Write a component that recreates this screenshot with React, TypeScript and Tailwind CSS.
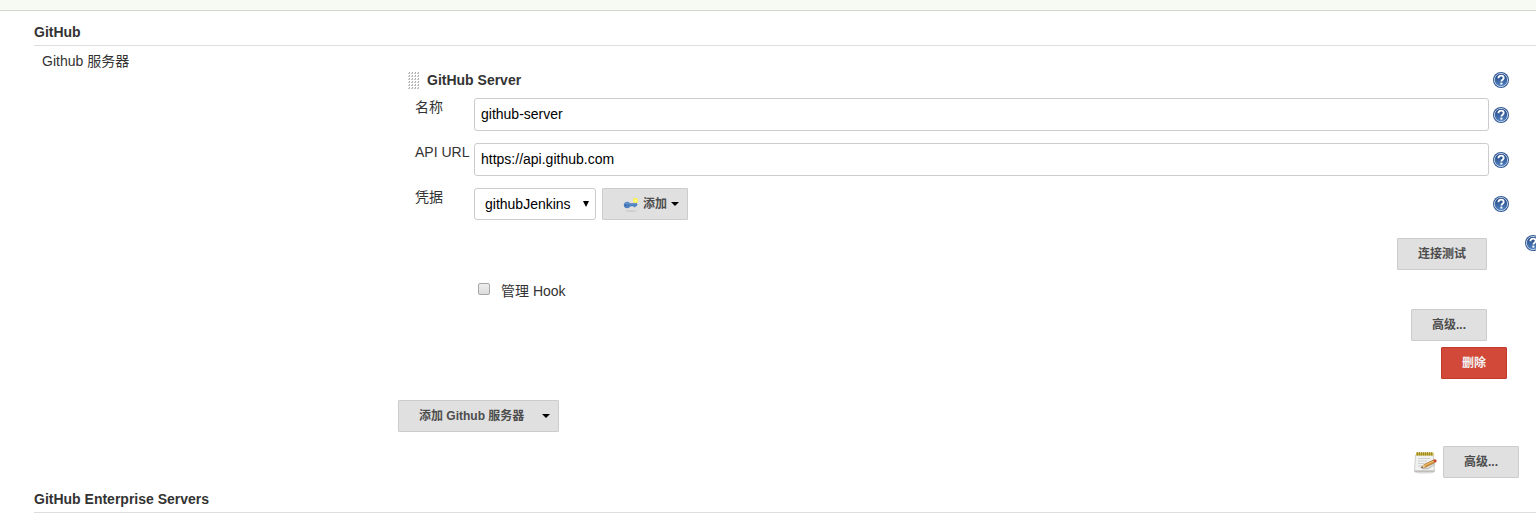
import type { ReactNode } from 'react';

const buttonBase =
  'flex h-8 shrink-0 items-center whitespace-nowrap rounded-[1px] border text-xs font-bold';
const grayButton = `${buttonBase} border-[#cccccc] bg-[#e0e0e0] px-5 text-[#4d4d4d]`;
const menuButton = `${buttonBase} border-[#cccccc] bg-[#e0e0e0] pr-2 pl-5 text-[#4d4d4d]`;
const redButton = `${buttonBase} border-[#c03b2b] bg-[#d24939] px-5 text-[#f2f2f2]`;

function HelpButton({ topic }: { topic: string }) {
  return (
    <button type="button" aria-label={`帮助: ${topic}`} className="block size-4 shrink-0">
      <svg viewBox="0 0 16 16" className="block size-4" aria-hidden="true">
        <defs>
          <linearGradient id="help-fill" x1="0" y1="0" x2="0" y2="1">
            <stop offset="0" stopColor="#1c3f7c" />
            <stop offset="1" stopColor="#5587c4" />
          </linearGradient>
        </defs>
        <circle cx="8" cy="8" r="8" fill="#335b96" />
        <circle cx="8" cy="8" r="6.6" fill="url(#help-fill)" stroke="#dbe5f2" strokeWidth="0.8" />
        <path
          d="M5.4 6.3C5.4 4.6 6.5 3.7 8.1 3.7c1.5 0 2.6.8 2.6 2.2 0 1.8-2.3 2-2.3 3.7"
          fill="none"
          stroke="#ffffff"
          strokeWidth="1.8"
        />
        <rect x="7.4" y="10.6" width="2" height="2" fill="#ffffff" />
      </svg>
    </button>
  );
}

function Caret() {
  return (
    <svg viewBox="0 0 8 4" className="h-1 w-2 shrink-0" aria-hidden="true">
      <path d="M0 0h8L4 4z" fill="#000000" />
    </svg>
  );
}

function KeyIcon() {
  return (
    <svg viewBox="0 0 16 16" className="size-4 shrink-0" aria-hidden="true">
      <ellipse cx="8" cy="15" rx="6" ry="0.8" fill="#c8c8c8" />
      <path
        d="M0.8 9C0.8 7 2.2 5.7 4.200 5.700C5.800 5.700 6.600 7 7.500 7H13.500L14.600 8.500L13.600 10.200H12.600L12.400 11.200H10.800L10.500 10.300H7.800C6.800 11 6 12.300 4.200 12.300C2.200 12.300 0.800 11 0.800 9z"
        fill="#4b7fbf"
      />
      <path d="M2 7.600C3.400 6.600 5 6.900 6.400 7.900H13.300" fill="none" stroke="#7ba3d6" strokeWidth="0.9" />
      <circle cx="2.700" cy="9.200" r="0.700" fill="#2f5b98" />
      <path d="M10.300 2.600L12.300 2L14.500 2.500L15 4.500L14.500 6.500L12.500 7L10.600 6.400L10 4.500z" fill="#fbef3c" />
      <circle cx="12.500" cy="4.500" r="1.200" fill="#fffcb0" />
    </svg>
  );
}

function NotepadIcon() {
  return (
    <svg viewBox="0 0 24 24" className="size-6 shrink-0" aria-hidden="true">
      <ellipse cx="11.5" cy="22.5" rx="10" ry="0.9" fill="#dadada" />
      <path d="M2.500 5h18l1 16.500h-20z" fill="#f1f1f0" stroke="#c6c6c3" strokeWidth="0.8" />
      <path d="M1.500 21h20" stroke="#adadaa" strokeWidth="1" />
      <path d="M3 2.500h17.500v3H3z" fill="#c7b23c" />
      <path
        d="M4.500 2v3.500M6.500 2v3.500M8.500 2v3.500M10.500 2v3.500M12.500 2v3.500M14.500 2v3.500M16.500 2v3.500M18.500 2v3.500"
        stroke="#8d7a20"
        strokeWidth="0.7"
      />
      <path d="M5 8.500h12M5 11h9M5 13.500h6M5 16h4" stroke="#c9cccf" strokeWidth="0.9" />
      <path d="M9 18.600h6l7-4.500" fill="none" stroke="#bfbfbb" strokeWidth="1.2" />
      <path d="M8 17.800l3-3.300 10-4.700 1.300 2.500-10 5.200z" fill="#d9973d" stroke="#8a5a20" strokeWidth="0.6" />
      <path d="M11 15.500l10-4.700" stroke="#f4c87e" strokeWidth="0.8" />
      <path d="M8 17.800l3-3.300 1.300 3z" fill="#e6cda2" />
      <path d="M8 17.800l1.300-1.500.6 1.300z" fill="#3d3428" />
      <path d="M20.400 10.100l1.700-.8q1.900.3 1.500 2.200l-1.700.9z" fill="#cf382c" />
    </svg>
  );
}

function GripHandle() {
  return (
    <svg viewBox="0 0 12 18" className="h-[18px] w-3 shrink-0" aria-hidden="true">
      <defs>
        <pattern id="grip-dots" width="3" height="3" patternUnits="userSpaceOnUse">
          <path d="M0 2h2v1H0z" fill="#c4c4c4" />
          <path d="M1 1h1v1H1z" fill="#a8a8a8" />
        </pattern>
      </defs>
      <path d="M0 0h12v18H0z" fill="url(#grip-dots)" />
    </svg>
  );
}

function SectionTitle({ children }: { children: ReactNode }) {
  return (
    <h2 className="border-b border-[#dddddd] pt-3 pb-1 text-sm leading-[18px] font-bold">{children}</h2>
  );
}

function Field({ id, label, children }: { id: string; label: string; children: ReactNode }) {
  return (
    <div className="flex pr-[27px] pl-[17px]">
      <label htmlFor={id} className="w-[59px] shrink-0 leading-[18px] whitespace-nowrap">
        {label}
      </label>
      <div className="flex min-w-0 flex-1 items-center justify-between gap-1">
        {children}
        <HelpButton topic={label} />
      </div>
    </div>
  );
}

const inputClass =
  'h-[33px] min-w-0 flex-1 rounded-[3px] border border-[#cccccc] bg-white px-1.5 pb-0.5 text-sm text-black';

export default function App() {
  return (
    <div className="overflow-hidden bg-white font-['Liberation_Sans','Noto_Sans_CJK_SC',sans-serif] text-sm text-[#333333]">
      <header className="h-[11px] border-b border-[#d3d7cf] bg-[#f6faf2]" />
      <main className="pl-[34px]">
        <section>
          <SectionTitle>GitHub</SectionTitle>
          <div className="flex">
            <div className="w-[364px] shrink-0 pt-[5px] pl-2 leading-5">Github 服务器</div>
            <div className="min-w-0 flex-1 pt-[22px]">
              <div className="mb-1.5 flex h-6 items-center pr-[27px] pl-2.5">
                <GripHandle />
                <h3 className="flex-1 pl-[7px] font-bold">GitHub Server</h3>
                <HelpButton topic="GitHub Server" />
              </div>
              <div className="flex flex-col gap-3">
                <Field id="server-name" label="名称">
                  <input id="server-name" type="text" defaultValue="github-server" className={inputClass} />
                </Field>
                <Field id="api-url" label="API URL">
                  <input id="api-url" type="text" defaultValue="https://api.github.com" className={inputClass} />
                </Field>
                <Field id="credentials" label="凭据">
                  <div className="flex gap-1.5">
                    <div className="relative">
                      <select
                        id="credentials"
                        className="h-8 w-[122px] appearance-none rounded-[3px] border border-[#cccccc] bg-white pl-2.5 text-sm text-black"
                      >
                        <option>githubJenkins</option>
                      </select>
                      <svg
                        viewBox="0 0 6 6"
                        className="pointer-events-none absolute top-[13px] right-[7px] size-1.5"
                        aria-hidden="true"
                      >
                        <path d="M0 0h6L3 6z" fill="#000000" />
                      </svg>
                    </div>
                    <button type="button" className={`${menuButton} gap-1`}>
                      <KeyIcon />
                      添加
                      <Caret />
                    </button>
                  </div>
                </Field>
              </div>
              <div className="mt-[15px] flex items-start justify-end gap-[38px]">
                <div className="ml-auto pt-[3px]">
                  <button type="button" className={grayButton}>连接测试</button>
                </div>
                <div className="-mr-[5px] shrink-0">
                  <HelpButton topic="连接测试" />
                </div>
              </div>
              <label className="mt-[11px] ml-20 flex w-fit items-center gap-[11px] leading-5">
                <input
                  type="checkbox"
                  className="mb-1 size-3 appearance-none rounded-xs border border-[#a6a6a6] bg-linear-to-b from-[#eeeeee] to-[#dcdcdc] checked:bg-[#4d4d4d]"
                />
                管理 Hook
              </label>
              <div className="mt-2 flex justify-end pr-[49px]">
                <button type="button" className={grayButton}>高级...</button>
              </div>
              <div className="mt-1.5 flex justify-end pr-[29px]">
                <button type="button" className={redButton}>删除</button>
              </div>
              <button type="button" className={`${menuButton} mt-[21px] gap-[18px]`}>
                添加 Github 服务器
                <Caret />
              </button>
              <div className="mt-3.5 flex items-center justify-end gap-1.5 pr-[17px]">
                <NotepadIcon />
                <button type="button" className={grayButton}>高级...</button>
              </div>
            </div>
          </div>
        </section>
        <section>
          <SectionTitle>GitHub Enterprise Servers</SectionTitle>
        </section>
      </main>
    </div>
  );
}
